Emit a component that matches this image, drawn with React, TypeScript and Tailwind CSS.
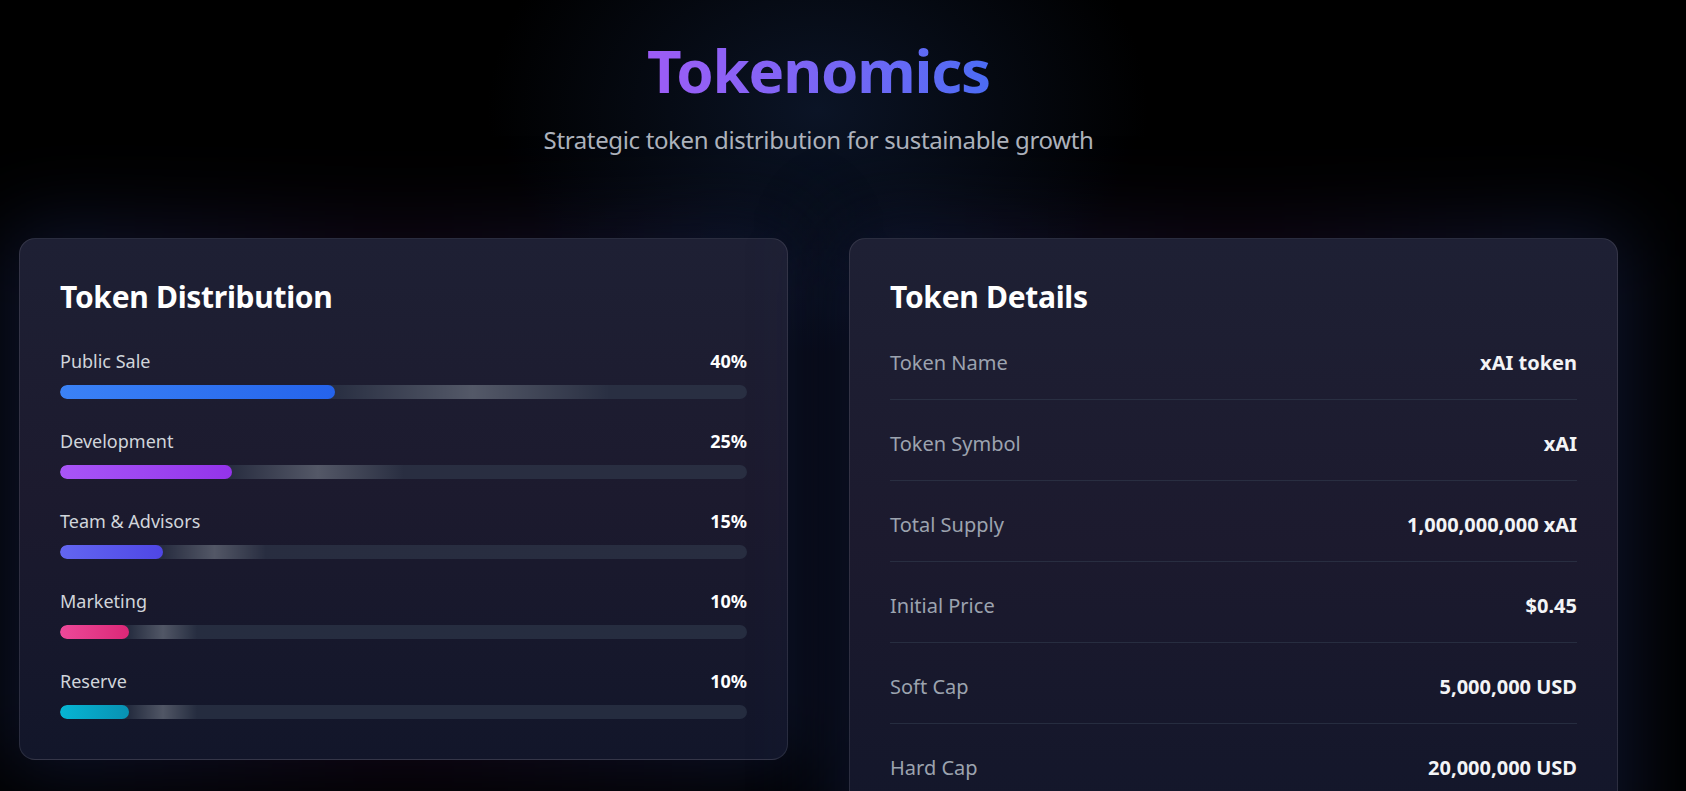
import React from 'react';

type Allocation = {
  label: string;
  percent: number;
  bar: string;
};

const allocations: Allocation[] = [
  { label: 'Public Sale', percent: 40, bar: 'from-[#3b82f6] to-[#2563eb]' },
  { label: 'Development', percent: 25, bar: 'from-[#a855f7] to-[#9333ea]' },
  { label: 'Team & Advisors', percent: 15, bar: 'from-[#6366f1] to-[#4f46e5]' },
  { label: 'Marketing', percent: 10, bar: 'from-[#ec4899] to-[#db2777]' },
  { label: 'Reserve', percent: 10, bar: 'from-[#06b6d4] to-[#0891b2]' },
];

const details = [
  { label: 'Token Name', value: 'xAI token' },
  { label: 'Token Symbol', value: 'xAI' },
  { label: 'Total Supply', value: '1,000,000,000 xAI' },
  { label: 'Initial Price', value: '$0.45' },
  { label: 'Soft Cap', value: '5,000,000 USD' },
  { label: 'Hard Cap', value: '20,000,000 USD' },
];

const Card: React.FC<{ title: string; children: React.ReactNode }> = ({ title, children }) => (
  <div className="relative isolate">
    {/* soft glow sitting behind the panel */}
    <div className="absolute -inset-3 -z-10 rounded-3xl bg-gradient-to-r from-[#16234d]/60 via-[#2c1240]/35 to-[#16234d]/60 blur-2xl" />
    <div className="rounded-2xl border border-white/10 bg-gradient-to-b from-[#1e2034] via-[#1c1a2e] to-[#12162a] p-10">
      <h3 className="mb-8 text-3xl font-bold tracking-[-0.01em] text-white">{title}</h3>
      {children}
    </div>
  </div>
);

const ProgressRow: React.FC<{ item: Allocation }> = ({ item }) => (
  <div>
    <div className="mb-[10px] flex items-center justify-between text-lg">
      <span className="text-[#d1d5db]">{item.label}</span>
      <span className="font-bold text-white">{item.percent}%</span>
    </div>
    <div className="h-3.5 w-full overflow-hidden rounded-full bg-gray-700/50">
      <div
        className={`relative h-full rounded-full bg-gradient-to-r ${item.bar}`}
        style={{ width: `${item.percent}%` }}
      >
        <div className="absolute inset-y-0 left-full w-full bg-gradient-to-r from-transparent via-white/20 to-transparent" />
      </div>
    </div>
  </div>
);

export default function App() {
  return (
    <div className="min-h-screen bg-black bg-[radial-gradient(ellipse_330px_250px_at_818px_110px,#0b1426_0%,transparent_100%)] pl-[19px] pr-[68px] pt-10 pb-24 font-['Noto_Sans',sans-serif]">
      <div className="w-[1599px]">
        <header className="text-center">
          <h1 className="mx-auto w-fit bg-gradient-to-r from-[#9d5cf6] to-[#4b6cf4] bg-clip-text text-6xl font-bold tracking-[-0.02em] text-transparent">
            Tokenomics
          </h1>
          <p className="mt-6 text-2xl tracking-[-0.015em] text-[#aeb3bd]">
            Strategic token distribution for sustainable growth
          </p>
        </header>

        <div className="mt-[82px] grid grid-cols-2 items-start gap-[61px]">
          <Card title="Token Distribution">
            <div className="space-y-7">
              {allocations.map((a) => (
                <ProgressRow key={a.label} item={a} />
              ))}
            </div>
          </Card>

          <Card title="Token Details">
            <div>
              {details.map((d, i) => (
                <div
                  key={d.label}
                  className={`flex items-center justify-between border-b border-gray-700/50 pb-[22px] text-xl ${
                    i === 0 ? 'pt-0.5' : 'pt-[30px]'
                  }`}
                >
                  <span className="text-[#9ca3af]">{d.label}</span>
                  <span className="font-bold text-gray-100">{d.value}</span>
                </div>
              ))}
            </div>
          </Card>
        </div>
      </div>
    </div>
  );
}
